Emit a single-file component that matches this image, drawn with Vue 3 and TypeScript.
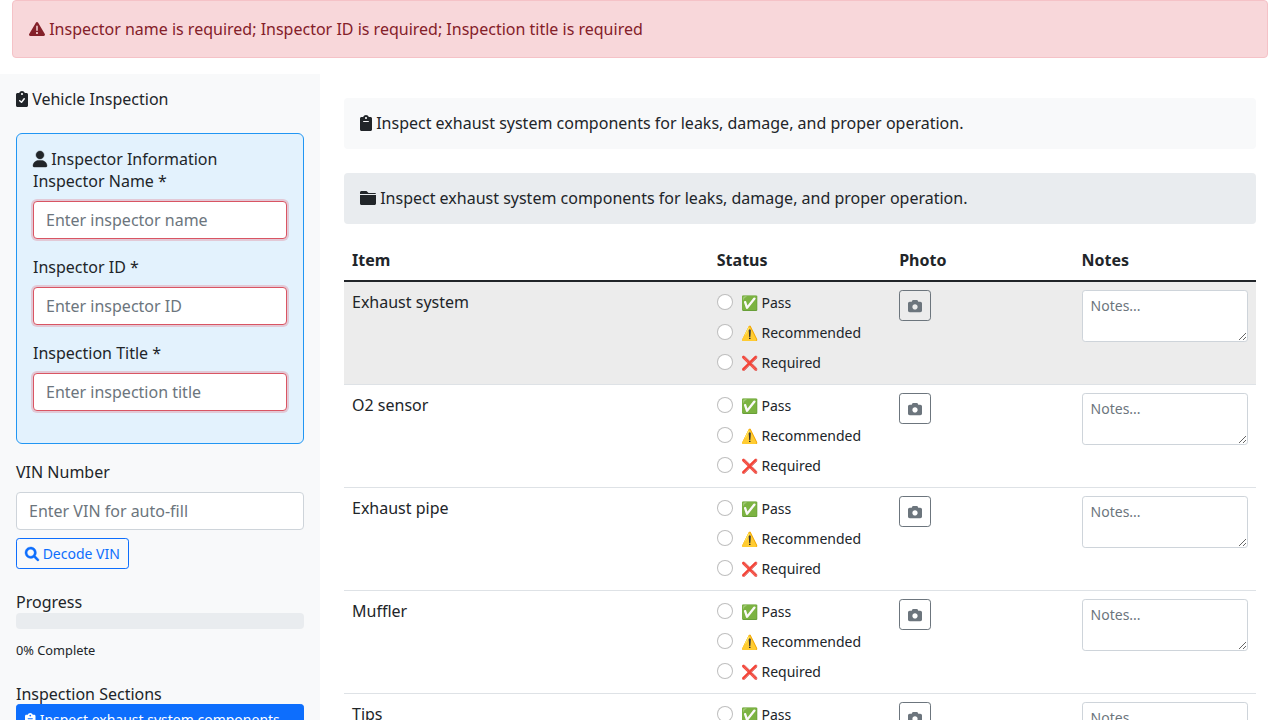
<script setup lang="ts">
import { h, reactive } from 'vue'

interface Icon {
  width: number
  path: string
  weight?: number
}

const board =
  'M336 64h-53.88C268.9 26.8 233.7 0 192 0S115.1 26.8 101.9 64H48C21.5 64 0 85.48 0 112v352C0 490.5 21.5 512 48 512h288c26.5 0 48-21.48 48-48v-352C384 85.48 362.5 64 336 64zM192 64c17.67 0 32 14.33 32 32s-14.33 32-32 32S160 113.7 160 96S174.3 64 192 64z'

const icons: Record<string, Icon> = {
  warning: {
    width: 512,
    path: 'M506.3 417l-213.3-364c-16.33-28-57.54-28-73.98 0l-213.2 364C-10.59 444.9 9.849 480 42.74 480h426.6C502.1 480 522.6 445 506.3 417zM232 168c0-13.25 10.75-24 24-24S280 154.8 280 168v128c0 13.25-10.75 24-23.1 24S232 309.3 232 296V168zM256 416c-17.36 0-31.44-14.08-31.44-31.44c0-17.36 14.07-31.44 31.44-31.44s31.44 14.08 31.44 31.44C287.4 401.9 273.4 416 256 416z',
  },
  clipboardCheck: {
    width: 384,
    path: board + 'M282.9 262.8l-88 112c-4.094 5.188-10.25 8.375-16.83 9.062C177.3 383.1 176.6 384 175.1 384c-5.703 0-11.25-2.031-15.62-5.781l-56-48c-10.06-8.625-11.22-23.78-2.594-33.84c8.609-10.06 23.77-11.22 33.84-2.594l36.98 31.69l72.52-92.28c8.188-10.44 23.3-12.22 33.7-4.062C289.3 237.3 291.1 252.4 282.9 262.8z',
  },
  clipboard: {
    width: 384,
    path: board + 'M272 224h-160C103.2 224 96 216.8 96 208C96 199.2 103.2 192 112 192h160C280.8 192 288 199.2 288 208S280.8 224 272 224z',
  },
  user: {
    width: 448,
    weight: 14,
    path: 'M224 256c70.7 0 128-57.31 128-128s-57.3-128-128-128C153.3 0 96 57.31 96 128S153.3 256 224 256zM274.7 304H173.3C77.61 304 0 381.6 0 477.3c0 19.14 15.52 34.67 34.66 34.67h378.7C432.5 512 448 496.5 448 477.3C448 381.6 370.4 304 274.7 304z',
  },
  folder: {
    width: 512,
    path: 'M464 96h-192l-64-64h-160C21.5 32 0 53.5 0 80V128h512C512 110 490.5 96 464 96zM0 432C0 458.5 21.5 480 48 480h416c26.5 0 48-21.5 48-48V160H0V432z',
  },
  search: {
    width: 512,
    weight: 14,
    path: 'M500.3 443.7l-119.7-119.7c27.22-40.41 40.65-90.9 33.46-144.7C401.8 87.79 326.8 13.32 235.2 1.723C99.01-15.51-15.51 99.01 1.724 235.2c11.6 91.64 86.08 166.7 177.6 178.9c53.8 7.189 104.3-6.236 144.7-33.46l119.7 119.7c15.62 15.62 40.95 15.62 56.57 0C515.9 484.7 515.9 459.3 500.3 443.7zM79.1 208c0-70.58 57.42-128 128-128s128 57.42 128 128c0 70.58-57.42 128-128 128S79.1 278.6 79.1 208z',
  },
  camera: {
    width: 512,
    path: 'M194.6 32H317.4C338.1 32 356.4 45.22 362.9 64.82L373.3 96H448C483.3 96 512 124.7 512 160V416C512 451.3 483.3 480 448 480H64C28.65 480 0 451.3 0 416V160C0 124.7 28.65 96 64 96H138.7L149.1 64.82C155.6 45.22 173.9 32 194.6 32zM256 384C309 384 352 341 352 288C352 234.1 309 192 256 192C202.1 192 160 234.1 160 288C160 341 202.1 384 256 384z',
  },
}

const FaIcon = (props: { name: string }) => {
  const icon = icons[props.name]
  return h(
    'svg',
    {
      viewBox: `0 0 ${icon.width} 512`,
      style: { width: `${icon.width / 512}em` },
      class: 'icon',
      'aria-hidden': 'true',
    },
    [h('path', { d: icon.path, fill: 'currentColor', stroke: 'currentColor', 'stroke-width': icon.weight ?? 0 })],
  )
}
FaIcon.props = ['name']

const sectionText = 'Inspect exhaust system components for leaks, damage, and proper operation.'

const fields = [
  { id: 'name', label: 'Inspector Name *', placeholder: 'Enter inspector name' },
  { id: 'badge', label: 'Inspector ID *', placeholder: 'Enter inspector ID' },
  { id: 'title', label: 'Inspection Title *', placeholder: 'Enter inspection title' },
]

const statuses = [
  { value: 'pass', label: '✅ Pass' },
  { value: 'recommended', label: '⚠️ Recommended' },
  { value: 'required', label: '❌ Required' },
]

const items = reactive(
  ['Exhaust system', 'O2 sensor', 'Exhaust pipe', 'Muffler', 'Tips'].map((name) => ({
    name,
    status: '',
    notes: '',
  })),
)
</script>

<template>
  <div class="page">
    <div class="alert" role="alert">
      <FaIcon name="warning" /> Inspector name is required; Inspector ID is required; Inspection title is required
    </div>

    <div class="layout">
      <aside class="sidebar">
        <h4 class="heading brand"><FaIcon name="clipboardCheck" /> Vehicle Inspection</h4>

        <section class="inspector">
          <h6 class="heading"><FaIcon name="user" /> Inspector Information</h6>
          <div v-for="f in fields" :key="f.id" class="field">
            <label class="label" :for="f.id">{{ f.label }}</label>
            <input :id="f.id" class="control invalid" type="text" :placeholder="f.placeholder" />
          </div>
        </section>

        <div class="vin">
          <label class="label" for="vin">VIN Number</label>
          <input id="vin" class="control" type="text" placeholder="Enter VIN for auto-fill" />
          <button class="btn btn-decode" type="button"><FaIcon name="search" /> Decode VIN</button>
        </div>

        <div class="progress-block">
          <h6 class="heading">Progress</h6>
          <div class="progress"></div>
          <div><small class="complete">0% Complete</small></div>
        </div>

        <h6 class="heading">Inspection Sections</h6>
        <button class="btn btn-section" type="button"><FaIcon name="clipboard" class="section-icon" /> {{ sectionText }}</button>
      </aside>

      <main class="main">
        <h4 class="heading banner"><FaIcon name="clipboard" /> {{ sectionText }}</h4>
        <h5 class="heading banner group"><FaIcon name="folder" /> {{ sectionText }}</h5>

        <table class="table">
          <thead>
            <tr>
              <th class="col-item">Item</th>
              <th>Status</th>
              <th>Photo</th>
              <th>Notes</th>
            </tr>
          </thead>
          <tbody>
            <tr v-for="(item, i) in items" :key="item.name" :class="{ hovered: i === 0 }">
              <td>{{ item.name }}</td>
              <td>
                <div class="checks">
                  <label v-for="s in statuses" :key="s.value" class="check">
                    <input v-model="item.status" type="radio" class="radio" :name="'status-' + i" :value="s.value" />
                    <span>{{ s.label }}</span>
                  </label>
                </div>
              </td>
              <td>
                <button class="btn btn-photo" type="button" aria-label="Photo"><FaIcon name="camera" /></button>
              </td>
              <td><textarea v-model="item.notes" class="notes" rows="2" placeholder="Notes..."></textarea></td>
            </tr>
          </tbody>
        </table>
      </main>
    </div>
  </div>
</template>

<style>
html,
body {
  margin: 0;
  height: 100%;
  overflow: hidden;
}
</style>

<style scoped>
.page {
  height: 720px;
  overflow: hidden;
  background: #fff;
  color: #212529;
  font: 400 16px/1.5 "Noto Sans", "Liberation Sans", sans-serif;
}
.page *,
.page {
  box-sizing: border-box;
}
.icon {
  display: inline-block;
  height: 1em;
  overflow: visible;
  vertical-align: -0.125em;
}
.section-icon {
  margin-right: 0.5px;
}
.alert {
  margin: 0 12px 16px;
  padding: 16px;
  border: 1px solid #f5c2c7;
  border-radius: 4px;
  background: #f8d7da;
  color: #842029;
}
.layout {
  display: flex;
}
.sidebar {
  flex: 0 0 320px;
  padding: 16px;
  background: #f8f9fa;
}
.heading {
  margin: 0;
  font-size: 16px;
  font-weight: 400;
  line-height: 1.2;
}
.brand {
  margin-bottom: 24px;
}
.inspector {
  margin-bottom: 16px;
  padding: 16px;
  border: 1px solid #2196f3;
  border-radius: 6px;
  background: #e3f2fd;
}
.field {
  margin-bottom: 16px;
}
.label {
  display: block;
  margin-bottom: 8px;
}
.control {
  display: block;
  width: 100%;
  height: 38px;
  padding: 6px 12px;
  border: 1px solid #ced4da;
  border-radius: 4px;
  background: #fff;
  color: inherit;
  font: inherit;
}
.control::placeholder,
.notes::placeholder {
  color: #6c757d;
  opacity: 1;
}
.invalid {
  border-color: #d95563;
  box-shadow: 0 0 0 2px rgba(220, 53, 69, 0.21);
}
.btn {
  display: inline-block;
  padding: 4px 8px;
  border: 1px solid;
  border-radius: 3.2px;
  background: transparent;
  font: inherit;
  font-size: 14px;
}
.vin {
  margin-bottom: 24px;
}
.btn-decode {
  display: block;
  margin-top: 8px;
  color: #0d6efd;
}
.progress-block {
  margin-bottom: 24px;
}
.progress {
  height: 16px;
  margin-bottom: 8px;
  border-radius: 4px;
  background: #e9ecef;
}
.complete {
  font-size: 12.8px;
}
.btn-section {
  width: 100%;
  border-color: #0d6efd;
  background: #0d6efd;
  color: #fff;
  text-align: left;
}
.main {
  flex: 1;
  padding: 24px;
}
.banner {
  margin-bottom: 24px;
  padding: 16px;
  border-radius: 4px;
  background: #f8f9fa;
}
.group {
  margin-bottom: 16px;
  background: #e9ecef;
}
.table {
  width: 100%;
  border-collapse: collapse;
  table-layout: fixed;
}
.table th,
.table td {
  padding: 8px;
  border-bottom: 1px solid #dee2e6;
  text-align: left;
  vertical-align: top;
}
.table th {
  border-bottom: 2px solid #212529;
  font-weight: 700;
}
.col-item {
  width: 40%;
}
.hovered {
  background: #ececec;
}
.checks {
  display: grid;
  gap: 4px;
}
.check {
  display: flex;
  gap: 8px;
  height: 26px;
  font-size: 14px;
  line-height: 26px;
}
.radio {
  flex: none;
  width: 16px;
  height: 16px;
  margin: 4px 0 0;
  border: 1px solid rgba(0, 0, 0, 0.25);
  border-radius: 50%;
  background: #fff;
  appearance: none;
}
.radio:checked {
  border: 5px solid #0d6efd;
}
.btn-photo {
  display: block;
  color: #6c757d;
}
.notes {
  display: block;
  width: 100%;
  min-height: 52px;
  padding: 4px 8px;
  border: 1px solid #ced4da;
  border-radius: 3.2px;
  background: #fff;
  color: inherit;
  font: inherit;
  font-size: 14px;
  resize: vertical;
}
</style>
